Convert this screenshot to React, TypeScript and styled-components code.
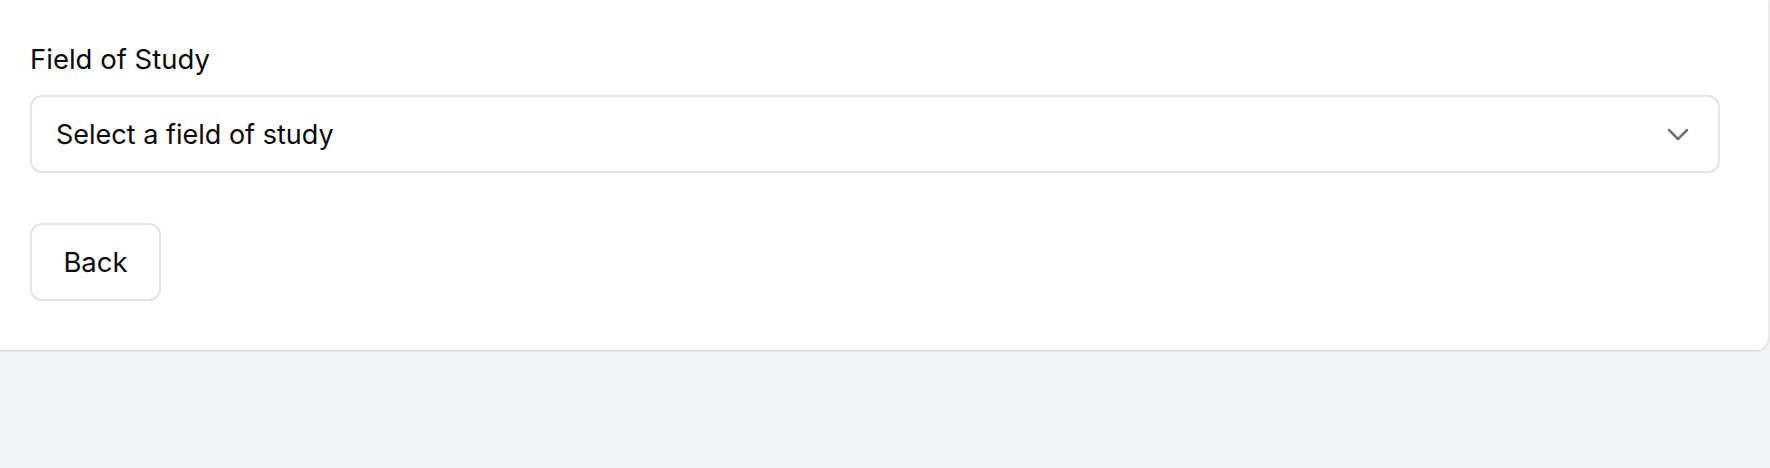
import styled, { createGlobalStyle } from "styled-components";

const GlobalStyle = createGlobalStyle`
  html, body {
    margin: 0;
    padding: 0;
    background: #f3f4f6;
    font-family: Inter, "Noto Sans", sans-serif;
    color: #0a0a0a;
    overflow: hidden;
  }
`;

const Page = styled.div`
  width: 1770px;
  height: 468px;
  background: #f3f4f6;
`;

const Card = styled.section`
  margin: 0 2px 0 -20px;
  padding: 39px 48px 49px 50px;
  background: #fff;
  border-radius: 0 0 12px 12px;
  box-shadow: 0 1px 3px rgba(0, 0, 0, 0.1), 0 1px 2px rgba(0, 0, 0, 0.06);
`;

const Label = styled.label`
  display: block;
  font-size: 27.5px;
  font-weight: 400;
  line-height: 40px;
  margin-bottom: 16px;
`;

const SelectBox = styled.button`
  display: flex;
  align-items: center;
  justify-content: space-between;
  width: 100%;
  height: 78px;
  padding: 0 28px 0 24px;
  background: #fff;
  border: 2px solid #e5e5e5;
  border-radius: 12px;
  font-family: inherit;
  font-size: 27px;
  color: #0a0a0a;
  cursor: pointer;
`;

const Chevron = styled.svg`
  width: 24px;
  height: 24px;
  color: #737373;
`;

const Actions = styled.div`
  display: flex;
  margin-top: 50px;
`;

const Button = styled.button`
  width: 131px;
  height: 78px;
  background: #fff;
  border: 2px solid #e5e5e5;
  border-radius: 12px;
  font-family: inherit;
  font-size: 27.5px;
  font-weight: 400;
  color: #0a0a0a;
  cursor: pointer;
`;

export default function App() {
  return (
    <Page>
      <GlobalStyle />
      <Card>
        <Label>Field of Study</Label>
        <SelectBox>
          <span>Select a field of study</span>
          <Chevron viewBox="0 0 24 24" fill="none" stroke="currentColor" strokeWidth="2.5" strokeLinecap="round" strokeLinejoin="round">
            <path d="M3 8l9 9 9-9" />
          </Chevron>
        </SelectBox>
        <Actions>
          <Button>Back</Button>
        </Actions>
      </Card>
    </Page>
  );
}
